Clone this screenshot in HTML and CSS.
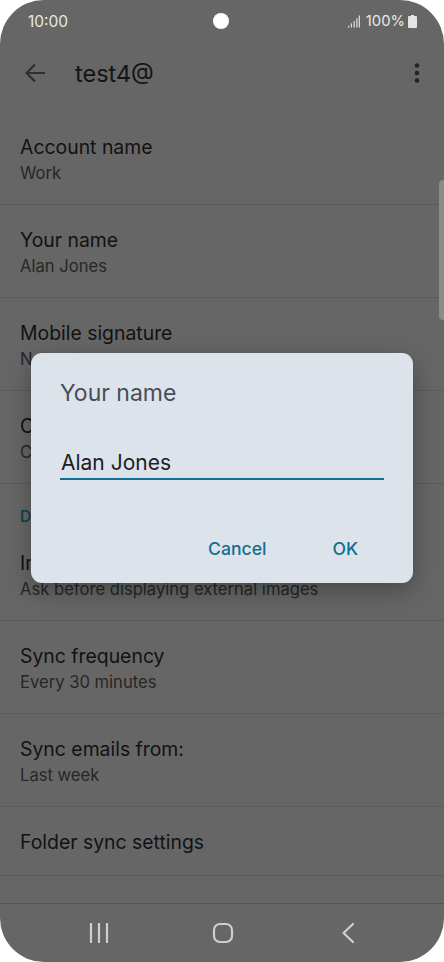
FILE: index.html
```html
<!DOCTYPE html>
<html lang="en">
<head>
<meta charset="utf-8">
<title>test4@</title>
<link rel="stylesheet" href="styles.css">
</head>
<body>
<div class="phone">
  <header class="status">
    <span class="time">10:00</span>
    <span class="camera"></span>
    <span class="status-right">
      <svg class="signal" width="13" height="13" viewBox="0 0 13 13"><path d="M0 11h1.4v2H0zM3 8.5h1.4V13H3zM6 6h1.4v7H6zM8.900 3h1.400v10H8.900zM11.600 0H13v13h-1.400z" fill="#d8d8d8"/></svg>
      <span class="pct">100%</span>
      <svg class="battery" width="9" height="13" viewBox="0 0 9 13"><path d="M3 0h3v1h2a1 1 0 0 1 1 1v10a1 1 0 0 1-1 1H1a1 1 0 0 1-1-1V2a1 1 0 0 1 1-1h2z" fill="#e4e4e4"/></svg>
    </span>
  </header>
  <div class="appbar">
    <svg class="back" width="22" height="20" viewBox="0 0 22 20"><path d="M21 10H2.500M11 1.500 2.500 10l8.500 8.500" fill="none" stroke="#2f2f2f" stroke-width="2.200"/></svg>
    <h1 class="title">test4@</h1>
    <svg class="more" width="6" height="20" viewBox="0 0 6 20"><circle cx="3" cy="2.500" r="2.300" fill="#222"/><circle cx="3" cy="10" r="2.300" fill="#222"/><circle cx="3" cy="17.500" r="2.300" fill="#222"/></svg>
  </div>
  <main class="list">
    <div class="row"><div class="row-title">Account name</div><div class="row-sub">Work</div></div>
    <div class="row"><div class="row-title">Your name</div><div class="row-sub">Alan Jones</div></div>
    <div class="row"><div class="row-title">Mobile signature</div><div class="row-sub">Not set</div></div>
    <div class="row"><div class="row-title">Contact</div><div class="row-sub">Contact</div></div>
    <div class="section">Data usage</div>
    <div class="row"><div class="row-title">Images</div><div class="row-sub">Ask before displaying external images</div></div>
    <div class="row"><div class="row-title">Sync frequency</div><div class="row-sub">Every 30 minutes</div></div>
    <div class="row"><div class="row-title">Sync emails from:</div><div class="row-sub">Last week</div></div>
    <div class="row row-single"><div class="row-title">Folder sync settings</div></div>
    <div class="row row-single"><div class="row-title">Auto-reply off</div></div>
    <div class="scrollbar"></div>
  </main>
  <nav class="nav">
    <svg width="20" height="20" viewBox="0 0 20 20"><path d="M2 1v18M10 1v18M18 1v18" stroke="#cfcfcf" stroke-width="2.200" stroke-linecap="round" fill="none"/></svg>
    <svg width="22" height="22" viewBox="0 0 22 22"><rect x="2" y="2" width="18" height="18" rx="6" fill="none" stroke="#cfcfcf" stroke-width="2.200"/></svg>
    <svg width="14" height="22" viewBox="0 0 14 22"><path d="M12 2 2.500 11l9.500 9" fill="none" stroke="#cfcfcf" stroke-width="2.200" stroke-linecap="round" stroke-linejoin="round"/></svg>
  </nav>
  <div class="dialog">
    <div class="dialog-title">Your name</div>
    <div class="dialog-input">Alan Jones</div>
    <div class="dialog-actions">
      <span class="action">Cancel</span>
      <span class="action">OK</span>
    </div>
  </div>
</div>
</body>
</html>
```

FILE: styles.css
```css
* { box-sizing: border-box; }
html, body { margin: 0; height: 100%; background: #fff; }
body { font-family: Inter, Roboto, sans-serif; overflow: hidden; }

.phone {
  position: relative;
  width: 444px;
  height: 962px;
  background: #666;
  border-radius: 44px;
  overflow: hidden;
  display: flex;
  flex-direction: column;
}

.status {
  position: relative;
  height: 42px;
  flex: none;
  display: flex;
  align-items: center;
  justify-content: space-between;
  padding: 0 27px 0 28px;
  color: #e8e8e8;
  font-size: 15.500px;
}
.camera {
  position: absolute;
  left: 213px;
  top: 13px;
  width: 16px;
  height: 16px;
  border-radius: 50%;
  background: #fff;
}
.status-right { display: flex; align-items: center; gap: 5px; }
.signal { margin-right: 1px; width: 12px; }
.pct { font-size: 14.800px; }
.battery { margin-left: -2px; }

.appbar {
  height: 62px;
  flex: none;
  display: flex;
  align-items: center;
  padding: 0 24px;
}
.title {
  margin: 0 0 0 29px;
  flex: 1;
  font-size: 23.500px;
  font-weight: 400;
  color: #141414;
}

.list {
  position: relative;
  flex: 1;
  min-height: 0;
  overflow: hidden;
  padding-top: 8px;
}
.row {
  height: 93px;
  padding: 23px 20px 0;
  border-bottom: 1px solid #5c5c5c;
}
.row-single { height: 69px; }
.row-title {
  font-size: 19.400px;
  line-height: 24px;
  color: #121212;
}
.row-sub {
  margin-top: 3px;
  font-size: 16.600px;
  line-height: 22px;
  color: #262626;
}
.section {
  height: 44px;
  padding: 22px 20px 0;
  font-size: 15.500px;
  line-height: 22px;
  font-weight: 500;
  color: #0a3f52;
}
.scrollbar {
  position: absolute;
  right: 0;
  top: 76px;
  width: 5px;
  height: 140px;
  border-radius: 4px 0 0 4px;
  background: #8b8b8b;
}

.nav {
  height: 59px;
  flex: none;
  border-top: 1px solid #555;
  display: grid;
  grid-template-columns: 123px 129px auto;
  align-items: center;
  padding-left: 89px;
}

.dialog {
  position: absolute;
  left: 31px;
  top: 353px;
  width: 382px;
  height: 230px;
  background: #dde3ea;
  border-radius: 11px;
  box-shadow: 0 8px 24px rgba(0, 0, 0, 0.3);
  padding: 26px 29px 0 29px;
  display: flex;
  flex-direction: column;
}
.dialog-title {
  font-size: 23px;
  line-height: 28px;
  color: #474e57;
}
.dialog-input {
  margin-top: 37px;
  height: 36px;
  padding: 6px 0 0 1px;
  font-size: 21px;
  line-height: 26px;
  color: #1d2024;
  border-bottom: 2.500px solid #136f90;
}
.dialog-actions {
  margin-top: 57px;
  display: flex;
  justify-content: flex-end;
  gap: 66px;
  padding-right: 26px;
  font-size: 17.600px;
  line-height: 24px;
  font-weight: 500;
  color: #106f92;
}
```
